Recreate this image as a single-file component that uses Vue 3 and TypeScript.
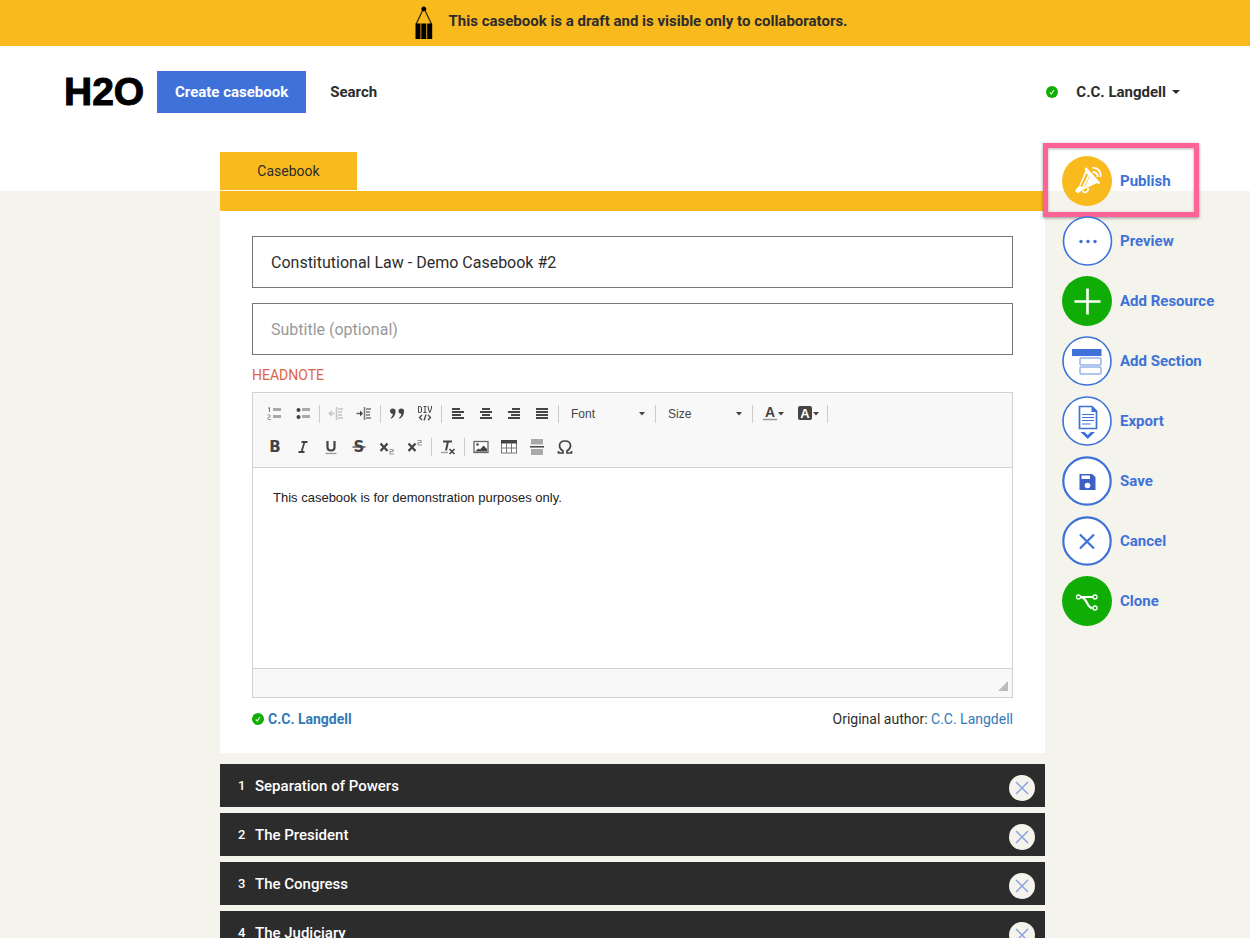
<script setup lang="ts">
import { ref } from 'vue'

interface Chapter {
  id: number
  title: string
}

interface Action {
  id: string
  label: string
}

const title = ref('Constitutional Law - Demo Casebook #2')
const subtitle = ref('')
const headnote = ref('This casebook is for demonstration purposes only.')

const actions: Action[] = [
  { id: 'publish', label: 'Publish' },
  { id: 'preview', label: 'Preview' },
  { id: 'resource', label: 'Add Resource' },
  { id: 'section', label: 'Add Section' },
  { id: 'export', label: 'Export' },
  { id: 'save', label: 'Save' },
  { id: 'cancel', label: 'Cancel' },
  { id: 'clone', label: 'Clone' },
]

const chapters = ref<Chapter[]>([
  { id: 1, title: 'Separation of Powers' },
  { id: 2, title: 'The President' },
  { id: 3, title: 'The Congress' },
  { id: 4, title: 'The Judiciary' },
])

function removeChapter(id: number) {
  chapters.value = chapters.value.filter((c) => c.id !== id)
}
</script>

<template>
  <div class="page">
    <div class="banner" role="status">
      <svg class="pencil" viewBox="0 0 18 34" aria-hidden="true">
        <path d="M1.200 18 8.800 2 16.500 18" fill="none" stroke="#3a2c08" stroke-width="1.300" />
        <path d="M6.300 4Q6.300 0.500 8.800 0.500T11.300 4L8.800 5.500Z" fill="#000" />
        <path d="M0.500 17.500h5v15.500h-5zM6.300 17.500h5v15.500h-5zM12.200 17.500h5v15.500h-5z" fill="#000" />
      </svg>
      <span>This casebook is a draft and is visible only to collaborators.</span>
    </div>

    <header class="header">
      <a class="logo" href="#">H2O</a>
      <button class="create" type="button">Create casebook</button>
      <a class="search" href="#">Search</a>
      <button class="user" type="button">
        <svg class="verified" viewBox="0 0 12 12" aria-hidden="true">
          <circle cx="6" cy="6" r="6" fill="#10ad06" />
          <path d="M3.800 6.500 5.300 8 8 4" fill="none" stroke="#c9f3c4" stroke-width="1.200" />
        </svg>
        <span>C.C. Langdell</span>
        <svg class="caret" viewBox="0 0 8 4" aria-hidden="true"><path d="M0 0h8L4 4z" fill="#2c2c2c" /></svg>
      </button>
    </header>

    <div class="workspace">
      <main class="main">
        <a class="tab" href="#">Casebook</a>
        <form class="panel" @submit.prevent>
          <input v-model="title" class="field" type="text" aria-label="Title" />
          <input v-model="subtitle" class="field" type="text" aria-label="Subtitle" placeholder="Subtitle (optional)" />
          <label class="label" for="headnote">HEADNOTE</label>

          <div class="editor">
            <div class="toolbar" role="toolbar" aria-label="Editor toolbar">
              <div class="tools">
                <button class="tool" type="button" aria-label="Numbered list">
                  <svg viewBox="0 0 16 16">
                    <path d="M6 2h8v3H6zM6 9h8v3H6z" fill="#a9a9a9" />
                    <path d="M1 2.500 2.500 1.500V6" fill="none" stroke="#777" />
                    <path d="M0.500 9h2.500v2.200h-2v2.300h3" fill="none" stroke="#999" />
                  </svg>
                </button>
                <button class="tool" type="button" aria-label="Bulleted list">
                  <svg viewBox="0 0 16 16">
                    <path d="M7 2h8v3H7zM7 9h8v3H7z" fill="#a9a9a9" />
                    <circle cx="3.500" cy="4" r="2" fill="#444" /><circle cx="3.500" cy="11" r="2" fill="#444" />
                  </svg>
                </button>
                <span class="divider"></span>
                <button class="tool faded" type="button" aria-label="Decrease indent">
                  <svg viewBox="0 0 16 16">
                    <path d="M8.500 1v13M10 3h5M10 6h4M10 9h4M10 12h5" fill="none" stroke="#777" stroke-width="1.500" />
                    <path d="M1 7.500h5.500M4 5 1.200 7.500 4 10" fill="none" stroke="#777" stroke-width="1.300" />
                  </svg>
                </button>
                <button class="tool" type="button" aria-label="Increase indent">
                  <svg viewBox="0 0 16 16">
                    <path d="M8.500 1v13M10 3h5M10 6h4M10 9h4M10 12h5" fill="none" stroke="#777" stroke-width="1.500" />
                    <path d="M0.500 7.500h5" fill="none" stroke="#666" stroke-width="1.500" /><path d="M4 4.500 7 7.500 4 10.500z" fill="#444" />
                  </svg>
                </button>
                <span class="divider"></span>
                <button class="tool" type="button" aria-label="Block quote">
                  <svg viewBox="0 0 16 16">
                    <path d="M1 5.200a2.600 2.600 0 0 1 5.600 0C6.600 9 4.500 11.500 2 12.800L1.500 12C3 10.800 3.800 9.500 3.800 7.800 2.200 7.800 1 6.700 1 5.200zM9.500 5.200a2.600 2.600 0 0 1 5.600 0C15.100 9 13 11.500 10.500 12.800L10 12C11.500 10.800 12.300 9.500 12.300 7.800 10.700 7.800 9.500 6.700 9.500 5.200z" fill="#444" />
                  </svg>
                </button>
                <button class="tool" type="button" aria-label="Create div container">
                  <svg viewBox="0 0 16 16">
                    <path d="M1.500 0.500v6h1.200q1.800 0 1.800-1.500v-3q0-1.500-1.800-1.500zM6.500 0.500h3M8 0.500v6M6.500 6.500h3M11.200 0v2l1.500 4.500h.3L14.500 2V0" fill="none" stroke="#444" />
                    <path d="M5 9 2.500 11.500 5 14M11 9l2.500 2.500L11 14M9 8.500l-2 6" fill="none" stroke="#444" stroke-width="1.300" />
                  </svg>
                </button>
                <span class="divider"></span>
                <button class="tool" type="button" aria-label="Align left">
                  <svg viewBox="0 0 16 16"><path d="M2 3h8M2 6h12M2 9h9M2 12h12" stroke="#444" stroke-width="2" /></svg>
                </button>
                <button class="tool" type="button" aria-label="Center">
                  <svg viewBox="0 0 16 16"><path d="M4 3h8M2 6h12M4 9h8M2 12h12" stroke="#444" stroke-width="2" /></svg>
                </button>
                <button class="tool" type="button" aria-label="Align right">
                  <svg viewBox="0 0 16 16"><path d="M6 3h8M2 6h12M5 9h9M2 12h12" stroke="#444" stroke-width="2" /></svg>
                </button>
                <button class="tool" type="button" aria-label="Justify">
                  <svg viewBox="0 0 16 16"><path d="M2 3h12M2 6h12M2 9h12M2 12h12" stroke="#444" stroke-width="2" /></svg>
                </button>
                <span class="divider"></span>
                <span class="combo">
                  <select aria-label="Font"><option>Font</option></select>
                  <svg class="arrow" viewBox="0 0 6 4" aria-hidden="true"><path d="M0 0h6L3 3.500z" fill="#444" /></svg>
                </span>
                <span class="divider"></span>
                <span class="combo">
                  <select aria-label="Size"><option>Size</option></select>
                  <svg class="arrow" viewBox="0 0 6 4" aria-hidden="true"><path d="M0 0h6L3 3.500z" fill="#444" /></svg>
                </span>
                <span class="divider"></span>
                <button class="tool wide" type="button" aria-label="Text color">
                  <svg viewBox="0 0 16 16">
                    <text x="8" y="11" text-anchor="middle" font-size="14" font-weight="700" fill="#444">A</text>
                    <path d="M1 13.500h14" stroke="#999" stroke-width="1.500" />
                  </svg>
                  <svg class="arrow" viewBox="0 0 6 4"><path d="M0 0h6L3 3.500z" fill="#444" /></svg>
                </button>
                <button class="tool wide" type="button" aria-label="Background color">
                  <svg viewBox="0 0 16 16">
                    <rect x="1" y="0" width="14" height="14" rx="2" fill="#444" />
                    <text x="8" y="12" text-anchor="middle" font-size="13" font-weight="700" fill="#fff">A</text>
                  </svg>
                  <svg class="arrow" viewBox="0 0 6 4"><path d="M0 0h6L3 3.500z" fill="#444" /></svg>
                </button>
                <span class="divider"></span>
              </div>
              <div class="tools">
                <button class="tool" type="button" aria-label="Bold">
                  <svg viewBox="0 0 16 16"><text class="dejavu" x="8" y="13" text-anchor="middle" font-size="15" font-weight="700" fill="#444">B</text></svg>
                </button>
                <button class="tool" type="button" aria-label="Italic">
                  <svg viewBox="0 0 16 16"><path d="M6.500 3h6M3.500 13h6M9.500 3 6.500 13" fill="none" stroke="#444" stroke-width="1.800" /></svg>
                </button>
                <button class="tool" type="button" aria-label="Underline">
                  <svg viewBox="0 0 16 16">
                    <path d="M4.500 2v6.500q0 3 3.500 3t3.500-3V2" fill="none" stroke="#444" stroke-width="2.200" />
                    <path d="M2.500 14.500h11" stroke="#999" stroke-width="1.300" />
                  </svg>
                </button>
                <button class="tool" type="button" aria-label="Strikethrough">
                  <svg viewBox="0 0 16 16">
                    <text class="dejavu" x="8" y="13" text-anchor="middle" font-size="15" font-weight="700" fill="#444">S</text>
                    <path d="M1.500 8h13" stroke="#444" stroke-width="1.300" />
                  </svg>
                </button>
                <button class="tool" type="button" aria-label="Subscript">
                  <svg viewBox="0 0 16 16">
                    <path d="M1.500 4.500 8.500 12M8.500 4.500 1.500 12" stroke="#444" stroke-width="2.300" />
                    <path d="M10.500 10.500h3.500v2h-3v2.500h4" fill="none" stroke="#999" stroke-width="1.200" />
                  </svg>
                </button>
                <button class="tool" type="button" aria-label="Superscript">
                  <svg viewBox="0 0 16 16">
                    <path d="M1.500 4.500 8.500 12M8.500 4.500 1.500 12" stroke="#444" stroke-width="2.300" />
                    <path d="M10.500 1.500h3.500v2h-3V6h4" fill="none" stroke="#999" stroke-width="1.200" />
                  </svg>
                </button>
                <span class="divider"></span>
                <button class="tool" type="button" aria-label="Remove format">
                  <svg viewBox="0 0 16 16">
                    <path d="M3 2.500h9M8 2.500 6 11.500" fill="none" stroke="#444" stroke-width="2" />
                    <path d="M1 13.500h7" stroke="#999" stroke-width="1.300" />
                    <path d="m9.500 10 5 5M14.500 10l-5 5" stroke="#444" stroke-width="1.600" />
                  </svg>
                </button>
                <span class="divider"></span>
                <button class="tool" type="button" aria-label="Image">
                  <svg viewBox="0 0 16 16">
                    <rect x="1" y="2.500" width="14" height="11" fill="#fff" stroke="#666" stroke-width="1.300" />
                    <circle cx="4.500" cy="5.500" r="1.300" fill="#444" /><path d="m2 12.500 3.500-3L7 10.500l3.500-4L14 10v2.500z" fill="#444" />
                  </svg>
                </button>
                <button class="tool" type="button" aria-label="Table">
                  <svg viewBox="0 0 16 16">
                    <rect x="0.500" y="1.500" width="15" height="12.500" fill="#fff" stroke="#777" />
                    <path d="M0 1h16v3.500H0z" fill="#444" /><path d="M1 9h14M5.500 4v10M10.500 4v10" stroke="#777" />
                  </svg>
                </button>
                <button class="tool" type="button" aria-label="Page break">
                  <svg viewBox="0 0 16 16"><path d="M2 0h12v5.500H2zM2 10h12v6H2z" fill="#aaa" /><path d="M1 7.800h14" stroke="#444" stroke-width="1.500" /></svg>
                </button>
                <button class="tool" type="button" aria-label="Special character">
                  <svg viewBox="0 0 16 16">
                    <path d="M1.500 12v2H6v-2C3.500 10.500 2.500 9 2.500 6.800 2.500 4 4.500 2 8 2s5.500 2 5.500 4.800c0 2.200-1 3.700-3.500 5.200v2h4.500v-2" fill="none" stroke="#444" stroke-width="1.700" />
                  </svg>
                </button>
              </div>
            </div>
            <textarea id="headnote" v-model="headnote" class="content"></textarea>
            <div class="editor-foot">
              <svg class="grip" viewBox="0 0 10 10" aria-hidden="true"><path d="M10 0v10H0z" fill="#bbb" /></svg>
            </div>
          </div>

          <div class="credits">
            <a class="owner" href="#">
              <svg class="verified" viewBox="0 0 12 12" aria-hidden="true">
                <circle cx="6" cy="6" r="6" fill="#10ad06" />
                <path d="M3.800 6.500 5.300 8 8 4" fill="none" stroke="#c9f3c4" stroke-width="1.200" />
              </svg>
              <span>C.C. Langdell</span>
            </a>
            <span>Original author: <a href="#">C.C. Langdell</a></span>
          </div>
        </form>

        <ol class="chapters">
          <li v-for="chapter in chapters" :key="chapter.id" class="chapter">
            <span class="number">{{ chapter.id }}</span>
            <a href="#">{{ chapter.title }}</a>
            <button class="remove" type="button" :aria-label="`Remove ${chapter.title}`" @click="removeChapter(chapter.id)">
              <svg viewBox="0 0 26 26"><path d="m7 7 12 12M19 7 7 19" fill="none" stroke="#8aa3e0" stroke-width="1.500" /></svg>
            </button>
          </li>
        </ol>
      </main>

      <aside class="actions">
        <button v-for="action in actions" :key="action.id" class="action" type="button">
          <svg class="disc" viewBox="0 0 50 50" aria-hidden="true">
            <g v-if="action.id === 'publish'">
              <circle cx="25" cy="25" r="25" fill="#f9ba1e" />
              <path d="M24 13 36 26.500 19.500 34.500 16.500 31.500z" fill="#fff" />
              <path d="M25.200 18 19.300 30.500" stroke="#f9ba1e" stroke-width="2" />
              <path d="m27.800 20-5.500 11" stroke="#f9ba1e" stroke-width="0.700" />
              <path d="m23.300 12 14 15.500" stroke="#fff" stroke-width="2.400" />
              <path d="m13 34.500 3.500-4 3.500 4-4.500 3z" fill="#fff" />
              <path d="M20.500 34.500c1.500 3.500 6.500 1.500 5.500-2.500" fill="none" stroke="#fff" stroke-width="1.700" />
              <path d="M30.500 16.500c3-1 5.500 1.500 5 4.500M30.500 12c5-1 9 3.500 8 9" fill="none" stroke="#fff" stroke-width="1.900" />
            </g>
            <g v-else-if="action.id === 'preview'">
              <circle cx="25.500" cy="25" r="24" fill="#fff" stroke="#3e72d8" stroke-width="1.600" />
              <circle cx="19" cy="25.500" r="1.700" fill="#3e72d8" />
              <circle cx="26" cy="25.500" r="1.700" fill="#3e72d8" />
              <circle cx="33" cy="25.500" r="1.700" fill="#3e72d8" />
            </g>
            <g v-else-if="action.id === 'resource'">
              <circle cx="25" cy="25" r="25" fill="#10ad06" />
              <path d="M12.500 25.500h26M25.500 12.500v26" stroke="#fff" stroke-width="2.600" />
            </g>
            <g v-else-if="action.id === 'section'">
              <circle cx="25" cy="25" r="24" fill="#fff" stroke="#3e72d8" stroke-width="1.600" />
              <rect x="10" y="13" width="29.500" height="7" rx="0.500" fill="#3e72d8" />
              <rect x="18" y="22" width="21" height="7" rx="0.500" fill="#fff" stroke="#3e72d8" stroke-width="0.800" />
              <rect x="18" y="31" width="21" height="7" rx="0.500" fill="#fff" stroke="#3e72d8" stroke-width="0.800" />
            </g>
            <g v-else-if="action.id === 'export'">
              <circle cx="25" cy="25" r="24" fill="#fff" stroke="#3e72d8" stroke-width="1.600" />
              <path d="M17.500 10.500h12.500l4.500 4.500v17.500h-17z" fill="#fff" stroke="#3e72d8" stroke-width="1.700" />
              <path d="M29.500 10v6h6z" fill="#3e72d8" />
              <path d="M20 18.500h12M20 21.500h12M20 24.500h12M20 28h8.500" stroke="#3e72d8" stroke-width="1.100" />
              <path d="M18.500 36h4l3.200 3 3.200-3h4l-7.200 7z" fill="#3e72d8" />
            </g>
            <g v-else-if="action.id === 'save'">
              <circle cx="25" cy="25" r="23.700" fill="#fff" stroke="#3e72d8" stroke-width="2.200" />
              <path d="M17.500 18h12.500l3.500 3v13h-16z" fill="#3e60c4" />
              <path d="M19.500 19.500h8.500v3.500h-8.500z" fill="#fff" /><circle cx="25.500" cy="29.500" r="2.800" fill="#fff" />
            </g>
            <g v-else-if="action.id === 'cancel'">
              <circle cx="25" cy="25" r="23.700" fill="#fff" stroke="#3e72d8" stroke-width="2.200" />
              <path d="m18 18.500 14 14M32 18.500l-14 14" stroke="#3e72d8" stroke-width="2.200" />
            </g>
            <g v-else>
              <circle cx="25" cy="25" r="25" fill="#10ad06" />
              <path d="M18.500 21h12.500M18.500 21.200c7 0 6 11 12 11" fill="none" stroke="#fff" stroke-width="2.200" />
              <circle cx="16.500" cy="21" r="2" fill="#10ad06" stroke="#fff" stroke-width="1.300" />
              <circle cx="33" cy="21" r="2" fill="#10ad06" stroke="#fff" stroke-width="1.300" />
              <circle cx="33" cy="32" r="2" fill="#10ad06" stroke="#fff" stroke-width="1.300" />
            </g>
          </svg>
          <span>{{ action.label }}</span>
          <span v-if="action.id === 'publish'" class="highlight"></span>
        </button>
      </aside>
    </div>
  </div>
</template>

<style>
body {
  background: #f4f3ec;
}
</style>

<style scoped>
.page {
  min-height: 100vh;
  color: #2c2c2c;
  font-family: Roboto, "Liberation Sans", sans-serif;
  font-size: 14px;
}

.page *,
.page *::before {
  box-sizing: border-box;
}

button,
input,
select,
textarea {
  margin: 0;
  padding: 0;
  border: 0;
  border-radius: 0;
  background: none;
  color: inherit;
  font: inherit;
}

button {
  cursor: pointer;
}

a {
  color: inherit;
  text-decoration: none;
}

svg {
  display: block;
  flex: none;
  overflow: visible;
}

.banner {
  display: flex;
  align-items: center;
  justify-content: center;
  gap: 16px;
  height: 46px;
  padding-left: 12px;
  background: #f9ba1e;
  font-size: 15px;
  font-weight: 700;
}

.banner span {
  padding-bottom: 4px;
}

.pencil {
  width: 18px;
  height: 34px;
}

.header {
  display: flex;
  align-items: center;
  height: 91px;
  padding: 0 70px 0 64px;
  background: #fff;
  font-size: 15px;
  font-weight: 700;
}

.logo {
  width: 93px;
  color: #000;
  font-family: "Liberation Sans", Arial, sans-serif;
  font-size: 39px;
  font-weight: 700;
  line-height: 44px;
  -webkit-text-stroke: 1px #000;
}

.create {
  height: 42px;
  padding: 0 18px;
  background: #3e72d8;
  color: #fff;
}

.search {
  margin-left: 24px;
}

.user {
  display: flex;
  align-items: center;
  margin-left: auto;
}

.verified {
  width: 12px;
  height: 12px;
}

.user .verified {
  margin-right: 18px;
}

.caret {
  width: 8px;
  height: 4px;
  margin-left: 6px;
}

.workspace {
  display: grid;
  grid-template-columns: minmax(0, 1fr) 205px;
  padding: 15px 0 0 220px;
  background: linear-gradient(#fff 0 54px, #f4f3ec 54px);
}

.tab {
  display: flex;
  align-items: center;
  justify-content: center;
  width: 137px;
  height: 38px;
  background: #f9ba1e;
}

.panel {
  display: flex;
  flex-direction: column;
  margin-top: 1px;
  padding: 25px 32px 24px;
  border-top: 20px solid #f9ba1e;
  background: #fff;
}

.field {
  height: 52px;
  margin-bottom: 15px;
  padding: 0 18px;
  border: 1px solid #777;
  background: #fff;
  font-size: 16px;
}

.field::placeholder {
  color: #999;
  opacity: 1;
}

.label {
  margin-top: -5px;
  color: #dc6547;
  line-height: 20px;
}

.editor {
  margin-top: 7px;
  border: 1px solid #d1d1d1;
  font-family: "Liberation Sans", Arial, sans-serif;
}

.toolbar {
  padding: 4px 8px;
  border-bottom: 1px solid #d1d1d1;
  background: #f8f8f8;
}

.tools {
  display: flex;
  flex-wrap: wrap;
  align-items: center;
}

.tool {
  display: flex;
  align-items: center;
  justify-content: center;
  width: 28px;
  height: 33px;
}

.tool svg {
  width: 16px;
  height: 16px;
}

.tool.wide {
  width: 35px;
}

.faded {
  opacity: 0.4;
}

.divider {
  width: 1px;
  height: 18px;
  margin: 0 2px;
  background: #ccc;
}

.combo {
  position: relative;
  width: 92px;
}

.combo select {
  width: 100%;
  height: 32px;
  padding-left: 10px;
  appearance: none;
  color: #444;
  font-size: 12px;
}

.arrow,
.tool .arrow {
  width: 6px;
  height: 4px;
}

.combo .arrow {
  position: absolute;
  top: 14px;
  right: 8px;
  pointer-events: none;
}

.dejavu {
  font-family: "DejaVu Sans", sans-serif;
}

.content {
  display: block;
  width: 100%;
  height: 200px;
  padding: 20px;
  background: #fff;
  color: #222;
  font-size: 13px;
  line-height: 20px;
  resize: none;
}

.editor-foot {
  display: flex;
  align-items: flex-end;
  justify-content: flex-end;
  height: 29px;
  padding: 0 4px 6px;
  border-top: 1px solid #d1d1d1;
  background: #f8f8f8;
}

.grip {
  width: 10px;
  height: 10px;
}

.credits {
  display: flex;
  align-items: center;
  justify-content: space-between;
  margin-top: 11px;
  line-height: 20px;
}

.credits a {
  color: #337ab7;
}

.owner {
  display: flex;
  align-items: center;
  gap: 4px;
  font-weight: 700;
}

.chapters {
  display: grid;
  gap: 6px;
  margin: 11px 0 0;
  padding: 0;
  list-style: none;
}

.chapter {
  display: flex;
  align-items: center;
  height: 43px;
  padding: 0 10px 0 18px;
  background: #2c2c2c;
  color: #fff;
  font-size: 15px;
  font-weight: 500;
}

.number {
  width: 17px;
  font-size: 13px;
}

.remove {
  width: 26px;
  height: 26px;
  margin: 4px 0 0 auto;
  border-radius: 50%;
  background: #f4f3ec;
}

.actions {
  display: flex;
  flex-direction: column;
  align-items: flex-start;
  gap: 10px;
  padding: 4px 0 0 17px;
}

.action {
  position: relative;
  display: flex;
  align-items: center;
  gap: 8px;
  color: #3e72d8;
  font-size: 15px;
  font-weight: 700;
  line-height: 20px;
  white-space: nowrap;
}

.disc {
  width: 50px;
  height: 50px;
}

.highlight {
  position: absolute;
  inset: -13px -28px -11px -19px;
  border: 5px solid #fd6397;
  box-shadow: 0 1px 3px rgba(0, 0, 0, 0.4), inset 0 1px 3px rgba(0, 0, 0, 0.3);
}
</style>
